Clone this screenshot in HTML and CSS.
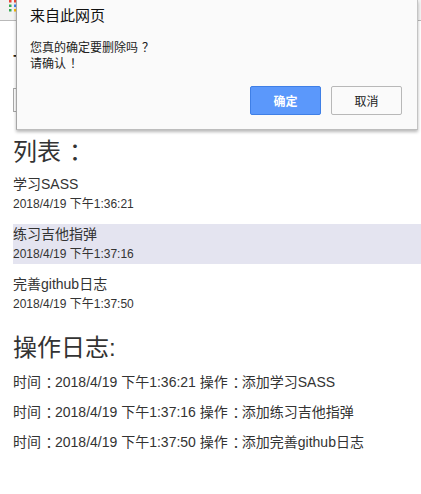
FILE: index.html
```html
<!DOCTYPE html>
<html lang="zh">
<head>
<meta charset="utf-8">
<title>TodoList</title>
<link rel="stylesheet" href="styles.css">
</head>
<body>
<div class="chrome-bar">
  <svg class="apps" width="12" height="12" viewBox="0 0 12 12">
    <rect x="0" y="0" width="2.5" height="2.5" fill="#ea4335"/>
    <rect x="5" y="0" width="2.5" height="2.5" fill="#ea4335"/>
    <rect x="0" y="4.5" width="2.5" height="2.5" fill="#34a853"/>
    <rect x="5" y="4.5" width="2.5" height="2.5" fill="#4285f4"/>
    <rect x="0" y="9" width="2.5" height="2.5" fill="#34a853"/>
    <rect x="5" y="9" width="2.5" height="2.5" fill="#fbbc05"/>
  </svg>
</div>
<div class="page">
  <h1 class="page-title">TodoList</h1>
  <input class="todo-input" type="text" placeholder="请输入待办事项">
  <h2 class="section-title">列表<span class="fw">：</span></h2>
  <ul class="todo-list">
    <li class="todo-item">
      <div class="todo-name">学习SASS</div>
      <div class="todo-time">2018/4/19 下午1:36:21</div>
    </li>
    <li class="todo-item is-active">
      <div class="todo-name">练习吉他指弹</div>
      <div class="todo-time">2018/4/19 下午1:37:16</div>
    </li>
    <li class="todo-item">
      <div class="todo-name">完善github日志</div>
      <div class="todo-time">2018/4/19 下午1:37:50</div>
    </li>
  </ul>
  <h2 class="section-title log-title">操作日志:</h2>
  <ul class="log-list">
    <li class="log-line">时间<span class="fw">：</span>2018/4/19 下午1:36:21 操作<span class="fw">：</span>添加学习SASS</li>
    <li class="log-line">时间<span class="fw">：</span>2018/4/19 下午1:37:16 操作<span class="fw">：</span>添加练习吉他指弹</li>
    <li class="log-line">时间<span class="fw">：</span>2018/4/19 下午1:37:50 操作<span class="fw">：</span>添加完善github日志</li>
  </ul>
</div>
<div class="dialog">
  <div class="dialog-title">来自此网页</div>
  <div class="dialog-msg">
    <div class="msg-line">您真的确定要删除吗<span class="fw">？</span></div>
    <div class="msg-line">请确认<span class="fw">！</span></div>
  </div>
  <div class="dialog-actions">
    <button class="btn btn-primary">确定</button>
    <button class="btn">取消</button>
  </div>
</div>
</body>
</html>
```
FILE: styles.css
```css
html, body {
  margin: 0;
  padding: 0;
  background: #fff;
}
body {
  font-family: "Liberation Sans", "Noto Sans CJK SC", sans-serif;
  color: #333;
  width: 421px;
  height: 494px;
  overflow: hidden;
  position: relative;
}
/* centre full-width punctuation inside its em box, as the reference font does */
.fw {
  padding-left: 0.33em;
  letter-spacing: -0.33em;
}
.chrome-bar {
  height: 20px;
  background: #f2f2f2;
  border-bottom: 1px solid #b9b9b9;
  position: relative;
  overflow: hidden;
}
.apps {
  position: absolute;
  left: 9px;
  top: -0.5px;
}
.page {
  padding-left: 13px;
}
.page-title {
  margin: 27px 0 0;
  font-size: 24px;
  line-height: 32px;
  font-weight: normal;
  color: #222;
}
.todo-input {
  display: block;
  box-sizing: border-box;
  margin: 8px 0 0;
  width: 200px;
  height: 24px;
  border: 1px solid #a9a9a9;
  padding: 0 2px;
  font: 13px "Liberation Sans", "Noto Sans CJK SC", sans-serif;
}
.todo-input::placeholder {
  color: #555;
}
.section-title {
  margin: 24px 0 0;
  font-size: 24px;
  line-height: 32px;
  font-weight: normal;
  color: #333;
}
.todo-list, .log-list {
  list-style: none;
  margin: 0;
  padding: 0;
}
.todo-list {
  margin-top: 6px;
  display: flex;
  flex-direction: column;
  gap: 10px;
}
.todo-item {
  height: 40px;
}
.todo-item.is-active {
  background: #e4e4f0;
}
.todo-name {
  font-size: 14px;
  line-height: 20px;
}
.todo-time {
  font-size: 12px;
  line-height: 20px;
}
.log-title {
  margin-top: 18px;
}
.log-list {
  margin-top: 3px;
}
.log-line {
  font-size: 14px;
  line-height: 30px;
}
.dialog {
  position: absolute;
  left: 16px;
  top: 0;
  width: 402px;
  height: 130px;
  box-sizing: border-box;
  background: #fafafa;
  border: 1px solid #a6a6a6;
  border-top: none;
  border-right-color: #c4c4c4;
  border-bottom-color: #bdbdbd;
  box-shadow: 0 2px 3px rgba(0, 0, 0, 0.28);
  padding: 4px 15px 0 13px;
  display: flex;
  flex-direction: column;
  font-family: "Liberation Sans", "Noto Sans CJK SC", sans-serif;
  color: #222;
}
.dialog-title {
  font-size: 15px;
  line-height: 24px;
  color: #111;
}
.dialog-msg {
  margin-top: 12px;
  font-size: 12px;
  color: #222;
}
.msg-line {
  height: 16px;
  line-height: 16px;
}
.dialog-actions {
  margin-top: 14px;
  display: flex;
  justify-content: flex-end;
  gap: 10px;
}
.btn {
  box-sizing: border-box;
  width: 71px;
  height: 29px;
  margin: 0;
  padding: 0;
  border: 1px solid #b8b8b8;
  border-radius: 2px;
  background: #fafafa;
  color: #222;
  font: 12px "Liberation Sans", "Noto Sans CJK SC", sans-serif;
}
.btn-primary {
  background: #5b98fb;
  border-color: #3f7fe6;
  color: #fff;
  font-weight: bold;
}
```
